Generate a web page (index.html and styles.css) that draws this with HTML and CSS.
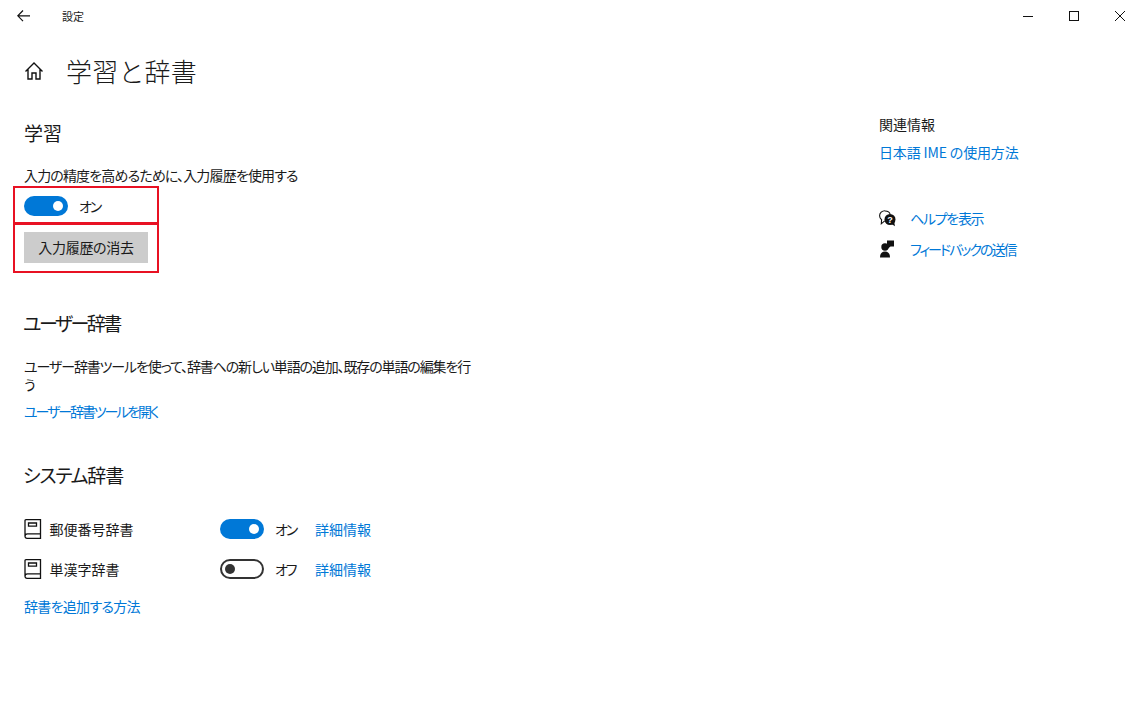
FILE: index.html
```html
<!DOCTYPE html>
<html lang="ja">
<head>
  <meta charset="UTF-8" />
  <title>設定</title>
  <link rel="stylesheet" href="styles.css">
</head>
<body>
  <!-- Title bar -->
  <header class="titlebar">
    <svg class="back-icon" width="14" height="12" viewBox="0 0 14 12"><path d="M6 .5.800 5.800 6 11.100M.800 5.800H13" fill="none" stroke="#111" stroke-width="1.200"/></svg>
    <span class="app-name">設定</span>
    <div class="window-buttons">
      <span class="win-btn"><svg width="10" height="10" viewBox="0 0 10 10"><path d="M0 5.500h10" stroke="#111" fill="none"/></svg></span>
      <span class="win-btn"><svg width="10" height="10" viewBox="0 0 10 10"><rect x=".5" y=".5" width="9" height="9" stroke="#111" fill="none"/></svg></span>
      <span class="win-btn"><svg width="10" height="10" viewBox="0 0 10 10"><path d="M0 0l10 10M10 0 0 10" stroke="#111" fill="none"/></svg></span>
    </div>
  </header>

  <div class="content">
    <main class="main">
      <div class="page-head">
        <svg class="home-icon" width="20" height="20" viewBox="0 0 20 20"><path d="M1.500 10.500 10 2l8.500 8.500M4 8.500V18h4v-6h4v6h4V8.500" fill="none" stroke="#111" stroke-width="1.400"/></svg>
        <h1>学習と辞書</h1>
      </div>

      <!-- 学習 -->
      <section class="learn">
        <h2>学習</h2>
        <p class="desc">入力の精度を高めるために、入力履歴を使用する</p>
        <div class="marked marked-toggle">
          <span class="toggle on"></span>
          <span class="toggle-label">オン</span>
        </div>
        <div class="marked marked-button">
          <button class="btn">入力履歴の消去</button>
        </div>
      </section>

      <!-- ユーザー辞書 -->
      <section class="user-dict">
        <h2>ユーザー辞書</h2>
        <p class="desc">ユーザー辞書ツールを使って、辞書への新しい単語の追加、既存の単語の編集を行う</p>
        <a class="link">ユーザー辞書ツールを開く</a>
      </section>

      <!-- システム辞書 -->
      <section class="system-dict">
        <h2>システム辞書</h2>
        <div class="dict-row">
          <span class="dict-name">
            <svg width="18" height="20" viewBox="0 0 18 20"><path d="M1 17V1.800A1 1 0 0 1 2 .700H16.500V19.300H3A2 2 0 0 1 1 17.300 2.500 2.500 0 0 1 3.500 14.800H16.500M4.500 4h8v3.200h-8z" fill="none" stroke="#111" stroke-width="1.300"/></svg>
            郵便番号辞書
          </span>
          <span class="toggle on"></span>
          <span class="state">オン</span>
          <a class="link">詳細情報</a>
        </div>
        <div class="dict-row">
          <span class="dict-name">
            <svg width="18" height="20" viewBox="0 0 18 20"><path d="M1 17V1.800A1 1 0 0 1 2 .700H16.500V19.300H3A2 2 0 0 1 1 17.300 2.500 2.500 0 0 1 3.500 14.800H16.500M4.500 4h8v3.200h-8z" fill="none" stroke="#111" stroke-width="1.300"/></svg>
            単漢字辞書
          </span>
          <span class="toggle off"></span>
          <span class="state">オフ</span>
          <a class="link">詳細情報</a>
        </div>
        <a class="link add-link">辞書を追加する方法</a>
      </section>
    </main>

    <aside class="side">
      <div class="side-title">関連情報</div>
      <a class="link ime-link">日本語 IME の使用方法</a>
      <ul class="help-list">
        <li>
          <svg width="18" height="18" viewBox="0 0 18 18"><path d="M6 1.800C3 1.800.600 3.900.600 6.800c0 1.700.800 3 2 3.900L2.300 14.800l3.400-3" fill="#fff" stroke="#111" stroke-width="1.100"/><path d="M6 2c2.700 0 4.800 1.500 5.200 3.500" fill="none" stroke="#111" stroke-width="1.100"/><circle cx="11" cy="10.500" r="5.500" fill="#111"/><path d="M12.500 15l3.500 2.300-.8-4.300z" fill="#111"/><text x="11" y="14" font-size="9" font-weight="700" fill="#fff" text-anchor="middle" font-family="Liberation Sans, sans-serif">?</text></svg>
          <a class="link help-link">ヘルプを表示</a>
        </li>
        <li>
          <svg width="18" height="18" viewBox="0 0 18 18"><circle cx="6" cy="7" r="3.700" fill="#111"/><path d="M1 17.500c0-4 1.800-6 5-6s5 2 5 6z" fill="#111"/><path d="M8 .5h7v6h-3.500L8.500 9V6.500H8z" fill="#111"/></svg>
          <a class="link feedback-link">フィードバックの送信</a>
        </li>
      </ul>
    </aside>
  </div>
</body>
</html>
```

FILE: styles.css
```css
* {
  box-sizing: border-box;
}

html, body {
  height: 100%;
}

body {
  margin: 0;
  background: #fff;
  color: #1a1a1a;
  font-family: "Noto Sans CJK JP", "Noto Sans", sans-serif;
  font-size: 14px;
  font-feature-settings: "palt";
  overflow: hidden;
}

/* Title bar */
.titlebar {
  display: flex;
  align-items: center;
  height: 32px;
  padding-left: 17px;
}

.back-icon {
  margin-right: 31px;
}

.app-name {
  font-size: 11px;
}

.window-buttons {
  display: flex;
  margin-left: auto;
}

.win-btn {
  display: flex;
  align-items: center;
  justify-content: center;
  width: 46px;
  height: 32px;
}

/* Layout */
.content {
  display: flex;
}

.main {
  width: 879px;
  padding-left: 24px;
}

.page-head {
  display: flex;
  align-items: center;
  height: 40px;
  margin-top: 19px;
}

.home-icon {
  margin-right: 22px;
}

h1 {
  margin: 0;
  font-size: 26px;
  font-weight: 300;
  font-feature-settings: normal;
  letter-spacing: 0.2px;
  line-height: 40px;
}

h2 {
  margin: 0 0 0 -1px;
  font-size: 19px;
  font-weight: 400;
  line-height: 28px;
}

.desc {
  margin: 0;
  font-size: 14px;
  line-height: 18px;
}

.link {
  color: #0078d7;
  font-size: 14px;
  line-height: 20px;
}

/* 学習 */
.learn {
  margin-top: 28px;
}

.learn h2 {
  margin-left: 0;
}

.learn .desc {
  margin-top: 19px;
  letter-spacing: -0.85px;
}

.marked {
  width: 146px;
  margin-left: -11px;
  border: 2px solid #e81123;
  padding-left: 9px;
}

.marked-toggle {
  display: flex;
  align-items: center;
  height: 38px;
  margin-top: 2px;
  padding-top: 1px;
}

.marked-button {
  height: 50px;
  margin-top: -1px;
  padding-top: 7px;
}

.toggle-label {
  margin-left: 11px;
  letter-spacing: -2px;
}

.btn {
  display: block;
  width: 124px;
  height: 31px;
  padding: 0 0 2px;
  border: 0;
  background: #ccc;
  color: #1a1a1a;
  font-family: inherit;
  font-size: 14px;
  font-feature-settings: "palt";
  letter-spacing: -0.3px;
}

/* Toggle switch */
.toggle {
  position: relative;
  display: inline-block;
  flex: none;
  width: 44px;
  height: 20px;
  border-radius: 10px;
}

.toggle::after {
  content: "";
  position: absolute;
  top: 5px;
  width: 10px;
  height: 10px;
  border-radius: 50%;
}

.toggle.on {
  background: #0078d7;
}

.toggle.on::after {
  right: 5px;
  background: #fff;
}

.toggle.off {
  border: 2px solid #333;
}

.toggle.off::after {
  top: 3px;
  left: 3px;
  background: #333;
}

/* ユーザー辞書 */
.user-dict {
  margin-top: 36px;
}

.user-dict h2 {
  letter-spacing: -2.5px;
}

.user-dict .desc {
  width: 450px;
  margin-top: 20px;
  letter-spacing: -1.13px;
}

.user-dict .link {
  display: block;
  margin-top: 8px;
  letter-spacing: -2.1px;
}

/* システム辞書 */
.system-dict {
  margin-top: 40px;
}

.system-dict h2 {
  margin-bottom: 20px;
  letter-spacing: -1.2px;
}

.dict-row {
  display: flex;
  align-items: center;
  height: 40px;
}

.dict-name {
  display: flex;
  align-items: center;
  gap: 7.5px;
  width: 196px;
}

.state {
  width: 28px;
  margin: 0 12px 0 11px;
  letter-spacing: -2px;
}

.add-link {
  display: block;
  margin-top: 7px;
  letter-spacing: -0.7px;
}

/* Side column */
.side {
  padding-top: 80px;
}

.side-title {
  line-height: 24px;
}

.ime-link {
  display: block;
  margin-top: 6px;
  letter-spacing: -0.15px;
}

.help-list {
  margin: 40px 0 0;
  padding: 0;
  list-style: none;
}

.help-list li {
  display: flex;
  align-items: center;
  gap: 13px;
  height: 31px;
}

.help-link {
  letter-spacing: -1.3px;
}

.feedback-link {
  letter-spacing: -2px;
}
```
